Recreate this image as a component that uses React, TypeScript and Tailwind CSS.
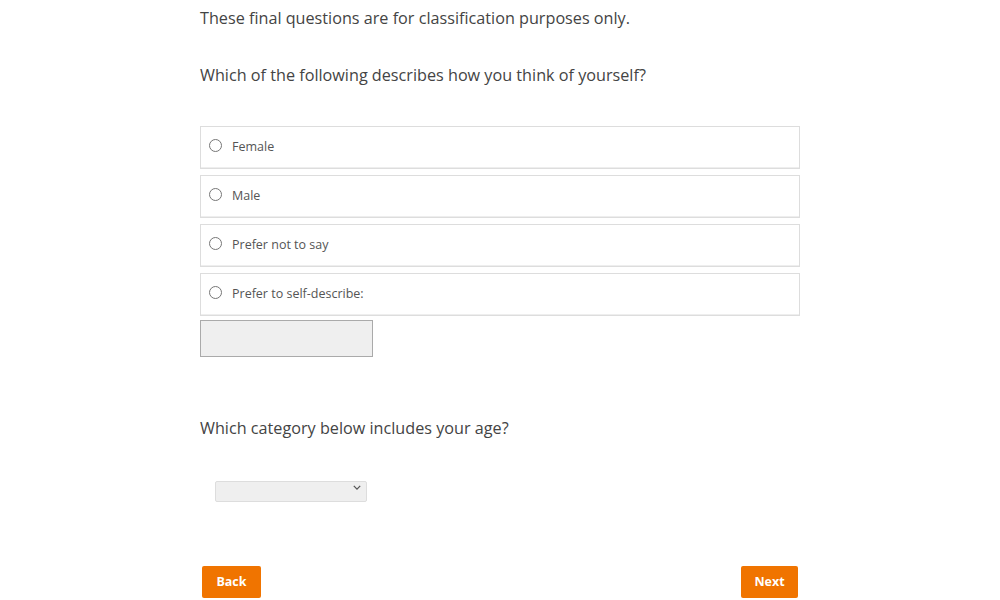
import { useState } from "react";

const options = ["Female", "Male", "Prefer not to say", "Prefer to self-describe:"];

export default function App() {
  const [picked, setPicked] = useState<string | null>(null);

  return (
    <div className="w-[1000px] h-[600px] bg-white overflow-hidden font-['Open_Sans',sans-serif] text-[#444]">
      <div className="w-[600px] mx-auto">
        <p className="pt-[6px] text-[16.2px] leading-[24px]">
          These final questions are for classification purposes only.
        </p>
        <p className="mt-[33px] text-[16.2px] leading-[24px]">
          Which of the following describes how you think of yourself?
        </p>

        {/* Options */}
        <div className="mt-[39px] flex flex-col gap-[6px]">
          {options.map((o) => (
            <label
              key={o}
              className="h-[43px] flex items-center border border-[#ddd] shadow-[inset_0_-1px_0_#eee] px-[8px] cursor-pointer"
            >
              <input
                type="radio"
                name="gender"
                checked={picked === o}
                onChange={() => setPicked(o)}
                className="w-[13px] h-[13px] mt-[-4px] accent-[#f07400]"
              />
              <span className="ml-[10px] text-[12.5px] text-[#555]">{o}</span>
            </label>
          ))}
        </div>
        <input
          type="text"
          className="mt-[4px] block w-[173px] h-[37px] bg-[#efefef] border border-[#aaa] outline-none"
        />

        <p className="mt-[59px] text-[16.2px] leading-[24px]">
          Which category below includes your age?
        </p>

        <div className="mt-[37px] ml-[15px] relative w-[152px] h-[21px]">
          <select className="appearance-none w-full h-full bg-[#efefef] border border-[#ddd] rounded-[2px] text-[12px]">
            <option value=""></option>
            <option>Under 18</option>
            <option>18-24</option>
            <option>25-34</option>
            <option>35-44</option>
            <option>45-54</option>
            <option>55-64</option>
            <option>65+</option>
          </select>
          <svg
            viewBox="0 0 10 6"
            className="absolute right-[6px] top-[8px] w-[8px] h-[5px] pointer-events-none"
          >
            <path d="M1 1l4 4 4-4" fill="none" stroke="#555" strokeWidth="1.6" />
          </svg>
        </div>

        <div className="mt-[68px] flex justify-between px-[2px]">
          <button className="w-[59px] h-[32px] bg-[#f07400] text-white text-[12.5px] font-bold rounded-[2px]">
            Back
          </button>
          <button className="w-[57px] h-[32px] bg-[#f07400] text-white text-[12.5px] font-bold rounded-[2px]">
            Next
          </button>
        </div>
      </div>
    </div>
  );
}
